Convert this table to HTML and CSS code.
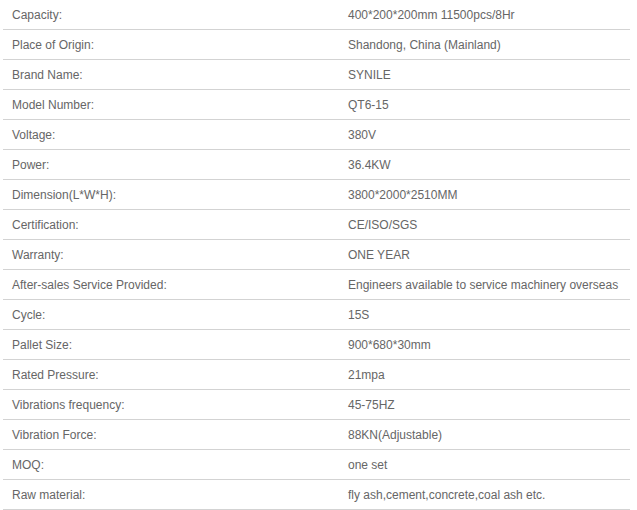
FILE: index.html
```html
<!DOCTYPE html>
<html>
<head>
<meta charset="utf-8">
<link rel="stylesheet" href="styles.css">
</head>
<body>
<table class="specs">
<tr><td class="k">Capacity:</td><td class="v">400*200*200mm 11500pcs/8Hr</td></tr>
<tr><td class="k">Place of Origin:</td><td class="v">Shandong, China (Mainland)</td></tr>
<tr><td class="k">Brand Name:</td><td class="v">SYNILE</td></tr>
<tr><td class="k">Model Number:</td><td class="v">QT6-15</td></tr>
<tr><td class="k">Voltage:</td><td class="v">380V</td></tr>
<tr><td class="k">Power:</td><td class="v">36.4KW</td></tr>
<tr><td class="k">Dimension(L*W*H):</td><td class="v">3800*2000*2510MM</td></tr>
<tr><td class="k">Certification:</td><td class="v">CE/ISO/SGS</td></tr>
<tr><td class="k">Warranty:</td><td class="v">ONE YEAR</td></tr>
<tr><td class="k">After-sales Service Provided:</td><td class="v">Engineers available to service machinery overseas</td></tr>
<tr><td class="k">Cycle:</td><td class="v">15S</td></tr>
<tr><td class="k">Pallet Size:</td><td class="v">900*680*30mm</td></tr>
<tr><td class="k">Rated Pressure:</td><td class="v">21mpa</td></tr>
<tr><td class="k">Vibrations frequency:</td><td class="v">45-75HZ</td></tr>
<tr><td class="k">Vibration Force:</td><td class="v">88KN(Adjustable)</td></tr>
<tr><td class="k">MOQ:</td><td class="v">one set</td></tr>
<tr><td class="k">Raw material:</td><td class="v">fly ash,cement,concrete,coal ash etc.</td></tr>
</table>
</body>
</html>
```
FILE: styles.css
```css
html, body {
  margin: 0;
  padding: 0;
  background: #fff;
}
.specs {
  margin-left: 3px;
  width: 627px;
  border-collapse: collapse;
  font-family: "Liberation Sans", Arial, sans-serif;
  font-size: 12px;
  color: #666;
}
.specs td {
  height: 29px;
  padding: 0;
  border-bottom: 1px solid #d3d3d3;
  vertical-align: middle;
  white-space: nowrap;
}
.specs .k {
  width: 345px;
  padding-left: 9px;
  box-sizing: border-box;
}
.specs .v {
  padding-left: 0;
}
```
